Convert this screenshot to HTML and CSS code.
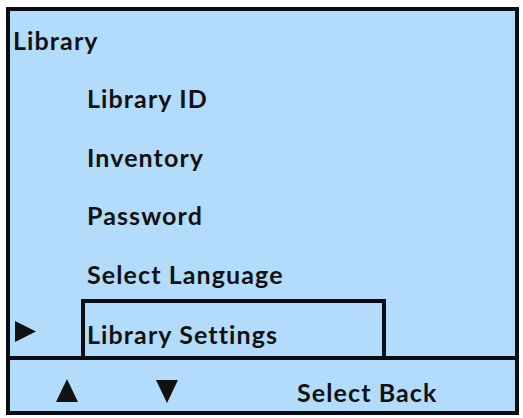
FILE: index.html
```html
<!DOCTYPE html>
<html>
<head>
<meta charset="utf-8">
<link rel="stylesheet" href="styles.css">
</head>
<body>
<div class="screen">
  <div class="menu">
    <div class="title">Library</div>
    <div class="item">Library ID</div>
    <div class="item">Inventory</div>
    <div class="item">Password</div>
    <div class="item">Select Language</div>
    <div class="selected-row">
      <svg class="pointer" width="21" height="21" viewBox="0 0 21 21"><polygon points="0,0 21,10.5 0,21" fill="#111"/></svg>
      <div class="selected-box">Library Settings</div>
    </div>
  </div>
  <div class="footer">
    <svg class="arrow up" width="22" height="23" viewBox="0 0 22 23"><polygon points="0,23 11,0 22,23" fill="#111"/></svg>
    <svg class="arrow down" width="22" height="23" viewBox="0 0 22 23"><polygon points="0,0 22,0 11,23" fill="#111"/></svg>
    <div class="softkeys">Select Back</div>
  </div>
</div>
</body>
</html>
```

FILE: styles.css
```css
html, body {
  margin: 0;
  padding: 0;
  background: #ffffff;
}
body {
  font-family: Lato, "Open Sans", sans-serif;
  font-weight: 700;
  font-size: 25px;
  letter-spacing: 1.1px;
  color: #111111;
}
.screen {
  box-sizing: border-box;
  margin: 7px 0 0 6px;
  width: 513px;
  height: 408px;
  border: 4px solid #0b0b12;
  background: #b3dbfc;
  display: flex;
  flex-direction: column;
}
.menu {
  height: 345px;
  display: flex;
  flex-direction: column;
  overflow: hidden;
}
.title {
  height: 58px;
  line-height: 58px;
  padding-left: 3px;
}
.item {
  height: 58.5px;
  line-height: 58.5px;
  padding-left: 77px;
  flex-shrink: 0;
}
.selected-row {
  margin-top: -4px;
  flex: 1;
  display: flex;
  align-items: flex-start;
}
.pointer {
  margin: 22px 0 0 5px;
  flex-shrink: 0;
}
.selected-box {
  box-sizing: border-box;
  margin-left: 45px;
  width: 305px;
  height: 100%;
  border: 4px solid #0b0b12;
  border-bottom: none;
  padding: 6px 0 0 2px;
  line-height: 50px;
}
.footer {
  flex: 1;
  border-top: 4px solid #0b0b12;
  display: flex;
  align-items: flex-start;
}
.arrow {
  margin-top: 19px;
  flex-shrink: 0;
}
.arrow.up {
  margin-left: 46px;
}
.arrow.down {
  margin-left: 78px;
  margin-top: 20px;
}
.softkeys {
  margin-left: 119px;
  margin-top: 20px;
  line-height: 24px;
}
```
